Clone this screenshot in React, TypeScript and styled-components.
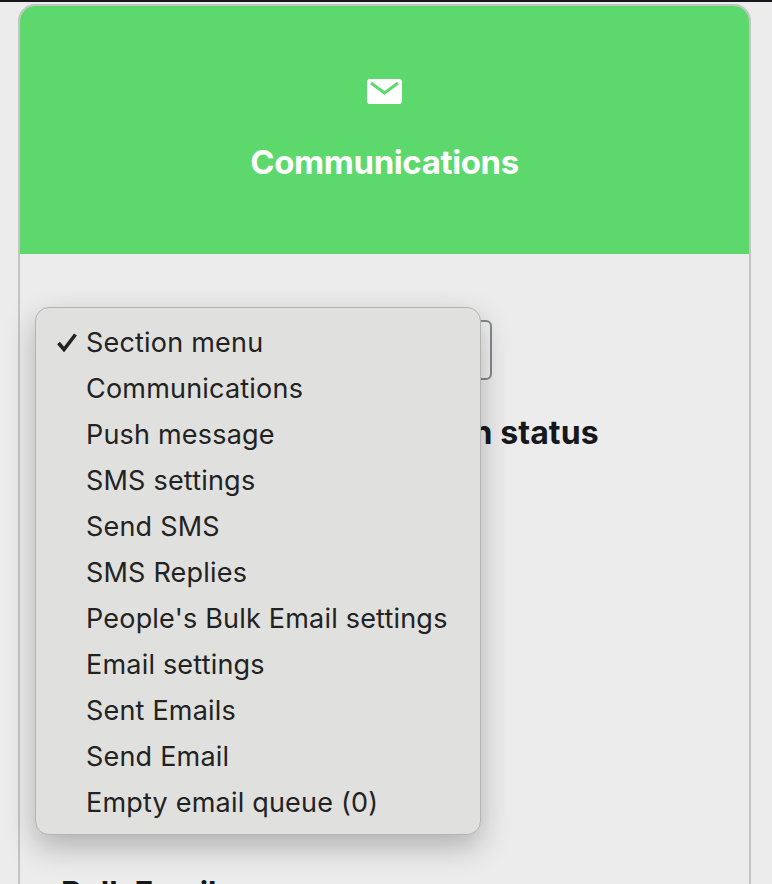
import React from "react";
import styled, { createGlobalStyle } from "styled-components";

const menuItems = [
    "Section menu",
    "Communications",
    "Push message",
    "SMS settings",
    "Send SMS",
    "SMS Replies",
    "People's Bulk Email settings",
    "Email settings",
    "Sent Emails",
    "Send Email",
    "Empty email queue (0)",
];

export default function App() {
    return (
        <Page>
            <GlobalStyle />
            <TopBar />
            <Card>
                <Header>
                    <MailIcon viewBox="0 0 35 25">
                        <rect width="35" height="25" rx="3" fill="#fff" />
                        <path d="M4 4 L17.5 14 L31 4" fill="none" stroke="#5cd86c" strokeWidth="3" />
                    </MailIcon>
                    <Title>Communications</Title>
                </Header>
                <Body>
                    <SelectBox />
                    <SectionHeading>Bulk Emails communication status</SectionHeading>
                    <BulkHeading>Bulk Email</BulkHeading>
                </Body>
            </Card>
            <Menu>
                {menuItems.map((item, i) => (
                    <MenuItem key={item}>
                        <Tick>{i === 0 && <CheckIcon viewBox="0 0 22 20"><path d="M2.5 11 L8 17.5 L19.5 2.5" fill="none" stroke="#222" strokeWidth="3.6" /></CheckIcon>}</Tick>
                        {item}
                    </MenuItem>
                ))}
            </Menu>
        </Page>
    );
}

const GlobalStyle = createGlobalStyle`
    html, body {
        margin: 0;
        height: 884px;
        overflow: hidden;
        background: #ececec;
        font-family: Inter, "Liberation Sans", sans-serif;
    }
`

const Page = styled.div`
    position: relative;
    height: 884px;
    overflow: hidden;
`

const TopBar = styled.div`
    height: 2px;
    background: #16181c;
`

const Card = styled.div`
    margin: 2px 21px 0 18px;
    height: 1000px;
    box-sizing: border-box;
    border: 2px solid #c4c4c4;
    border-radius: 17px;
    overflow: hidden;
    background: #ececec;
`

const Header = styled.div`
    height: 248px;
    background: #5cd86c;
    display: flex;
    flex-direction: column;
    align-items: center;
    padding-top: 73px;
    box-sizing: border-box;
`

const MailIcon = styled.svg`
    width: 35px;
    height: 25px;
    display: block;
`

const Title = styled.h1`
    margin: 40px 0 0;
    font-size: 33px;
    line-height: 36px;
    font-weight: 700;
    color: #fff;
    letter-spacing: -0.4px;
`

const Body = styled.div`
    padding: 66px 0 0 41px;
`

const SelectBox = styled.div`
    width: 431px;
    height: 60px;
    box-sizing: border-box;
    border: 2px solid #85878e;
    border-radius: 6px;
    background: #f0f0f0;
`

const SectionHeading = styled.h2`
    margin: 34px 0 0;
    font-size: 32px;
    line-height: 38px;
    font-weight: 700;
    letter-spacing: 0.1px;
    color: #16181c;
    white-space: nowrap;
`

const BulkHeading = styled.h3`
    margin: 422px 0 0;
    font-size: 31px;
    line-height: 38px;
    font-weight: 700;
    color: #16181c;
`

const Menu = styled.div`
    position: absolute;
    left: 35px;
    top: 307px;
    width: 446px;
    height: 528px;
    box-sizing: border-box;
    padding: 11px 0;
    background: #e0e0de;
    border: 1px solid #b4b4b2;
    border-radius: 14px;
    box-shadow: 0 12px 30px rgba(0, 0, 0, 0.25);
`

const MenuItem = styled.div`
    display: flex;
    align-items: center;
    height: 46px;
    font-size: 27px;
    letter-spacing: 0.2px;
    color: #222;
    white-space: nowrap;
`

const Tick = styled.span`
    width: 50px;
    padding-left: 20px;
    box-sizing: border-box;
    flex: none;
    display: flex;
    align-items: center;
`

const CheckIcon = styled.svg`
    width: 22px;
    height: 20px;
    display: block;
`
